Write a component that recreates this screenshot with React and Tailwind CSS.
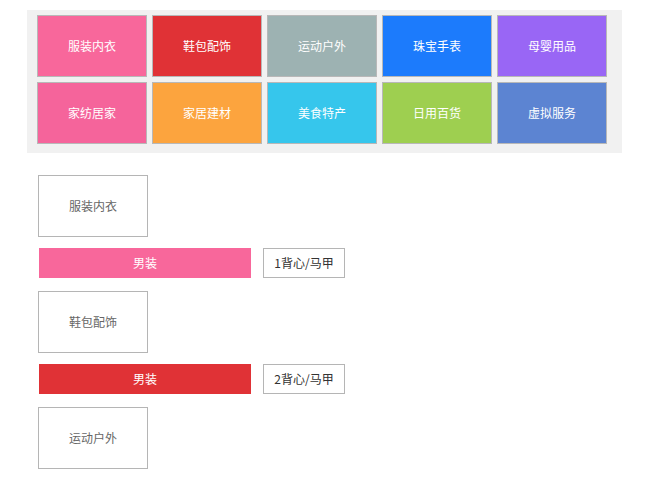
import React from 'react';

const cats = [
  { name: '服装内衣', bg: 'bg-[#f8679b]' },
  { name: '鞋包配饰', bg: 'bg-[#e03236]' },
  { name: '运动户外', bg: 'bg-[#9db2b2]' },
  { name: '珠宝手表', bg: 'bg-[#1c7bfc]' },
  { name: '母婴用品', bg: 'bg-[#9966f5]' },
  { name: '家纺居家', bg: 'bg-[#f5649b]' },
  { name: '家居建材', bg: 'bg-[#fca43e]' },
  { name: '美食特产', bg: 'bg-[#36c6ec]' },
  { name: '日用百货', bg: 'bg-[#9ecf50]' },
  { name: '虚拟服务', bg: 'bg-[#5c84d2]' },
];

const font = { fontFamily: '"Microsoft YaHei", "Noto Sans CJK SC", sans-serif' };

function Block({ name }) {
  return (
    <div className="w-[110px] h-[62px] border border-[#b5b5b5] flex items-center justify-center text-xs text-[#666]">
      {name}
    </div>
  );
}

function SubRow({ bg, label }) {
  return (
    <div className="flex items-center ml-px">
      <div className={`w-[212px] h-[30px] ${bg} text-white text-xs flex items-center justify-center`}>男装</div>
      <div className="ml-3 w-[82px] h-[30px] border border-[#b5b5b5] text-xs text-[#333] flex items-center justify-center">
        {label}
      </div>
    </div>
  );
}

export default function App() {
  return (
    <div className="w-[650px] h-[480px] bg-white overflow-hidden" style={font}>
      <div className="ml-[27px] mt-[10px] w-[595px] bg-[#f1f1f1] pl-[10px] pt-[5px] pb-[9px]">
        <div className="grid grid-cols-[repeat(5,110px)] gap-x-[5px] gap-y-[5px]">
          {cats.map((c) => (
            <div
              key={c.name}
              className={`${c.bg} h-[62px] border border-[#b8b8b8] flex items-center justify-center text-white text-xs`}
            >
              {c.name}
            </div>
          ))}
        </div>
      </div>

      <div className="ml-[38px] mt-[22px] flex flex-col">
        <Block name="服装内衣" />
        <div className="mt-[11px]"><SubRow bg="bg-[#f8679b]" label="1背心/马甲" /></div>
        <div className="mt-[13px]"><Block name="鞋包配饰" /></div>
        <div className="mt-[11px]"><SubRow bg="bg-[#e03236]" label="2背心/马甲" /></div>
        <div className="mt-[13px]"><Block name="运动户外" /></div>
      </div>
    </div>
  );
}
